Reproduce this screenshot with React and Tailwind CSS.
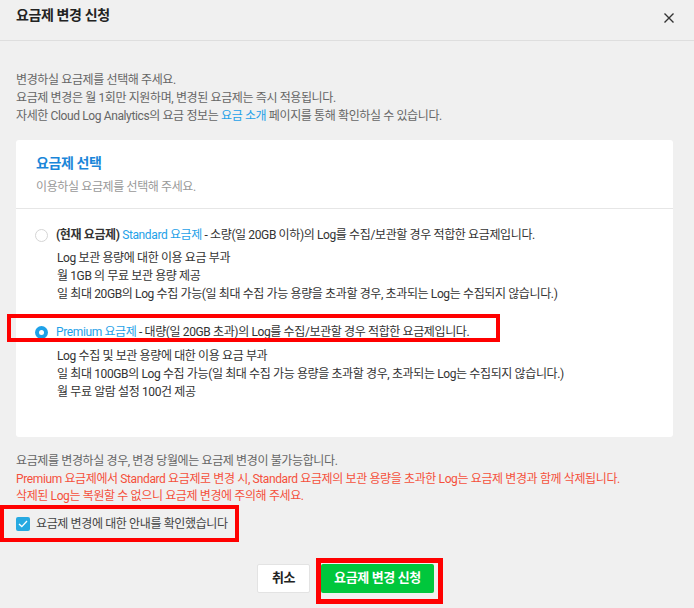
import React from 'react';

const STANDARD_LINES = [
  'Log 보관 용량에 대한 이용 요금 부과',
  '월 1GB 의 무료 보관 용량 제공',
  '일 최대 20GB의 Log 수집 가능(일 최대 수집 가능 용량을 초과할 경우, 초과되는 Log는 수집되지 않습니다.)',
];

const PREMIUM_LINES = [
  'Log 수집 및 보관 용량에 대한 이용 요금 부과',
  '일 최대 100GB의 Log 수집 가능(일 최대 수집 가능 용량을 초과할 경우, 초과되는 Log는 수집되지 않습니다.)',
  '월 무료 알람 설정 100건 제공',
];

function Radio({ checked }) {
  if (checked) {
    return (
      <span className="w-[13px] h-[13px] rounded-full bg-[#1ea1e8] flex items-center justify-center shrink-0">
        <span className="w-[5px] h-[5px] rounded-full bg-white" />
      </span>
    );
  }
  return <span className="w-[13px] h-[13px] rounded-full border border-[#d5d5d5] bg-white shrink-0" />;
}

function PlanOption({ checked, current, name, desc, lines }) {
  return (
    <div>
      <div className="flex items-center h-[18px]">
        <div className="w-[40px] flex justify-end pr-[8px]">
          <Radio checked={checked} />
        </div>
        <span className="text-[#333]">
          {current && <b className="font-bold">(현재 요금제) </b>}
          <span className="text-[#1ea1e8]">{name}</span> - {desc}
        </span>
      </div>
      <div className={`pl-[41px] ${checked ? 'mt-[6px]' : 'mt-[5px]'} text-[#333]`}>
        {lines.map((l) => (
          <p key={l} className="leading-[18px]">{l}</p>
        ))}
      </div>
    </div>
  );
}

export default function App() {
  return (
    <div className="relative w-[694px] h-[608px] overflow-hidden bg-[#f0f0f0] font-[Roboto,'Noto_Sans_CJK_KR',sans-serif] text-[12px] leading-[18px] tracking-[-0.38px]">
      {/* Header */}
      <div className="h-[41px] border-b border-[#dedede] flex items-start justify-between pl-4 pr-[20px] pt-[5px]">
        <h1 className="text-[14px] leading-[20px] font-bold text-[#222]">요금제 변경 신청</h1>
        <svg width="10" height="10" viewBox="0 0 10 10" className="mt-[8px]">
          <path d="M0.5 0.5 L9.5 9.5 M9.5 0.5 L0.5 9.5" stroke="#333" strokeWidth="1.4" />
        </svg>
      </div>

      {/* Intro */}
      <div className="px-4 pt-[30px] text-[#666]">
        <p>변경하실 요금제를 선택해 주세요.</p>
        <p>요금제 변경은 월 1회만 지원하며, 변경된 요금제는 즉시 적용됩니다.</p>
        <p>
          자세한 Cloud Log Analytics의 요금 정보는 <span className="text-[#1ea1e8]">요금 소개</span> 페이지를 통해 확인하실 수 있습니다.
        </p>
      </div>

      {/* Plan card */}
      <div className="ml-4 mt-[15px] w-[657px] bg-white rounded-[3px]">
        <div className="px-5 pt-[13px] pb-[12px] border-b border-[#e6e6e6]">
          <h2 className="text-[14px] leading-[20px] font-bold text-[#1a86d9]">요금제 선택</h2>
          <p className="mt-[5px] text-[#999]">이용하실 요금제를 선택해 주세요.</p>
        </div>
        <div className="pt-[17px] pb-[36px] flex flex-col gap-[20px]">
          <PlanOption
            current
            name="Standard 요금제"
            desc="소량(일 20GB 이하)의 Log를 수집/보관할 경우 적합한 요금제입니다."
            lines={STANDARD_LINES}
          />
          <PlanOption
            checked
            name="Premium 요금제"
            desc="대량(일 20GB 초과)의 Log를 수집/보관할 경우 적합한 요금제입니다."
            lines={PREMIUM_LINES}
          />
        </div>
      </div>

      {/* Notes */}
      <div className="px-4 mt-[16px] leading-[17.5px]">
        <p className="text-[#666]">요금제를 변경하실 경우, 변경 당월에는 요금제 변경이 불가능합니다.</p>
        <p className="text-[#f5503c]">Premium 요금제에서 Standard 요금제로 변경 시, Standard 요금제의 보관 용량을 초과한 Log는 요금제 변경과 함께 삭제됩니다.</p>
        <p className="text-[#f5503c]">삭제된 Log는 복원할 수 없으니 요금제 변경에 주의해 주세요.</p>
      </div>

      {/* Confirm checkbox */}
      <label className="px-4 mt-[9px] flex items-center gap-[6px] h-[18px] text-[#444]">
        <span className="w-[14px] h-[14px] rounded-[2px] bg-[#27a9e1] flex items-center justify-center">
          <svg width="10" height="8" viewBox="0 0 10 8">
            <path d="M1 4 L3.8 6.6 L9 1" fill="none" stroke="#fff" strokeWidth="1.3" />
          </svg>
        </span>
        요금제 변경에 대한 안내를 확인했습니다
      </label>

      {/* Buttons */}
      <div className="mt-[31px] flex justify-center gap-[11px] pr-[3px]">
        <button className="w-[53px] h-[29px] bg-white border border-[#e3e3e3] rounded-[2px] text-[13px] font-bold text-[#222]">
          취소
        </button>
        <button className="w-[113px] h-[29px] bg-[#00c73c] rounded-[2px] text-[13px] font-bold text-white">
          요금제 변경 신청
        </button>
      </div>

      {/* Red annotation boxes */}
      <div className="absolute left-[7px] top-[314px] w-[493px] h-[28px] border-4 border-[#ff0000]" />
      <div className="absolute left-0 top-[505px] w-[239px] h-[37px] border-4 border-[#ff0000]" />
      <div className="absolute left-[316px] top-[558px] w-[127px] h-[46px] border-[5px] border-[#ff0000]" />
    </div>
  );
}
